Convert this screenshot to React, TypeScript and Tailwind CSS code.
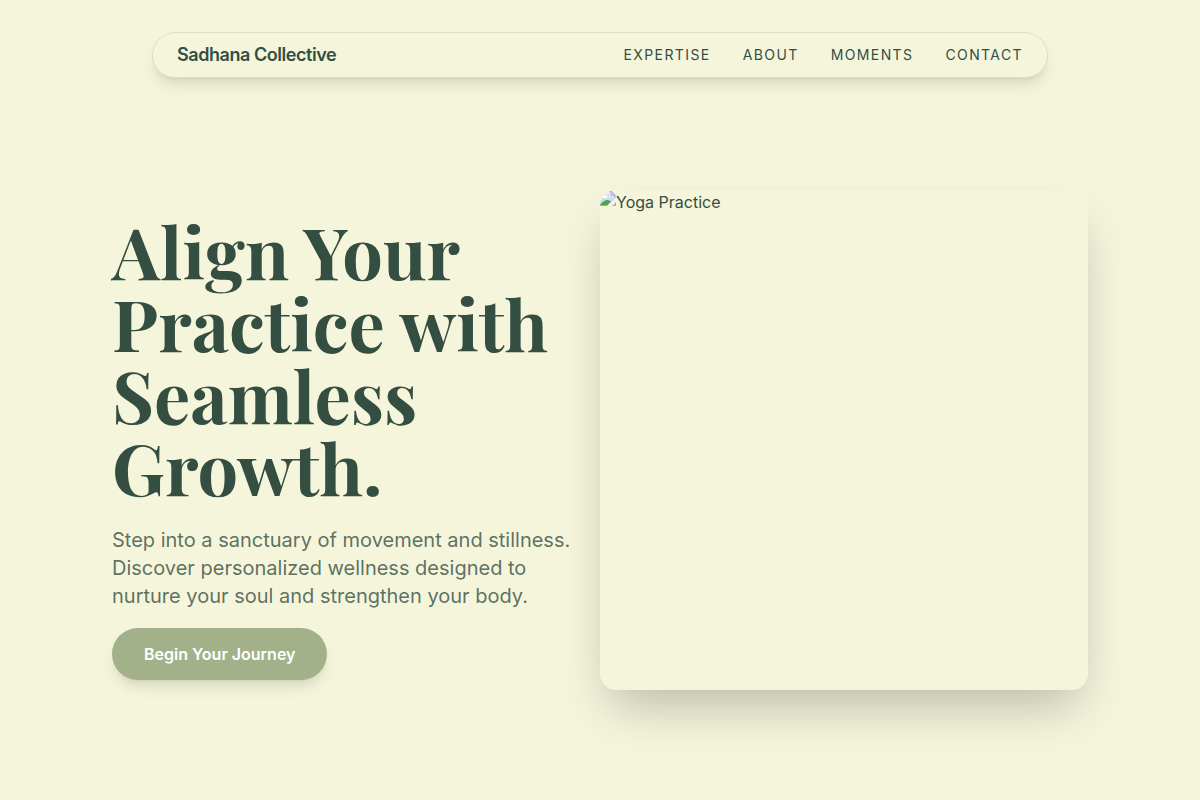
const links = [
  { label: "Expertise", href: "#expertise" },
  { label: "About", href: "#about" },
  { label: "Moments", href: "#moments" },
  { label: "Contact", href: "#contact" },
];

const BrokenImageIcon = () => (
  <svg viewBox="0 0 16 16" className="size-4 shrink-0" aria-hidden="true">
    <defs>
      <linearGradient id="sky" x1="0" y1="0" x2="0" y2="1">
        <stop offset="0" stopColor="#eef2fb" />
        <stop offset="1" stopColor="#b4c8f2" />
      </linearGradient>
    </defs>
    <path d="M0 1h11l4 4v11H0z" fill="url(#sky)" />
    <path d="M2 8c0-2 2-3 3-2 2-1 3 1 2 2z" fill="#fff" />
    <path d="M0 15.500c1-2 4-5 7-5.500 2 0 3 1 4 1.500L7 15.500z" fill="#4fa53a" />
    <path
      d="M0 1h11l4 4v3M11 1v4h4M0 15.500h7M12 15.500h3.500V12"
      fill="none"
      stroke="#a3a5b0"
    />
    <path d="M16 7.500L7 16h5l4-4z" fill="#f5f5dc" />
  </svg>
);

const Navbar = () => {
  return (
    <header className="px-6 pt-8">
      <nav className="mx-auto flex max-w-4xl items-center justify-between rounded-full border border-[#a3b18a]/30 px-6 py-2 shadow-lg">
        <a href="#top" className="text-lg font-semibold tracking-tight">
          Sadhana Collective
        </a>
        <ul className="flex gap-8 text-sm uppercase tracking-widest">
          {links.map(({ label, href }) => (
            <li key={href}>
              <a href={href}>{label}</a>
            </li>
          ))}
        </ul>
      </nav>
    </header>
  );
};

const Hero = () => {
  return (
    <section className="mx-auto grid max-w-5xl grid-cols-2 px-6 py-28">
      <div className="flex flex-col items-start pt-6">
        <h1 className="font-['Playfair_Display','Liberation_Serif',serif] text-7xl leading-none font-bold">
          Align Your Practice with Seamless Growth.
        </h1>
        <p className="mt-6 text-xl text-[#344e41]/80">
          Step into a sanctuary of movement and stillness. Discover personalized
          wellness designed to nurture your soul and strengthen your body.
        </p>
        <button className="mt-4.5 rounded-full bg-[#a3b18a] px-8 py-3.5 font-semibold text-white shadow-lg">
          Begin Your Journey
        </button>
      </div>
      <div className="flex h-[500px] items-start overflow-hidden rounded-2xl bg-[#f5f5dc] shadow-2xl">
        <BrokenImageIcon />
        <span>Yoga Practice</span>
      </div>
    </section>
  );
};

const App = () => {
  return (
    <div
      id="top"
      className="min-h-screen bg-[#f5f5dc] font-[Inter,sans-serif] text-[#344e41]"
    >
      <Navbar />
      <main>
        <Hero />
      </main>
    </div>
  );
};

export default App;
